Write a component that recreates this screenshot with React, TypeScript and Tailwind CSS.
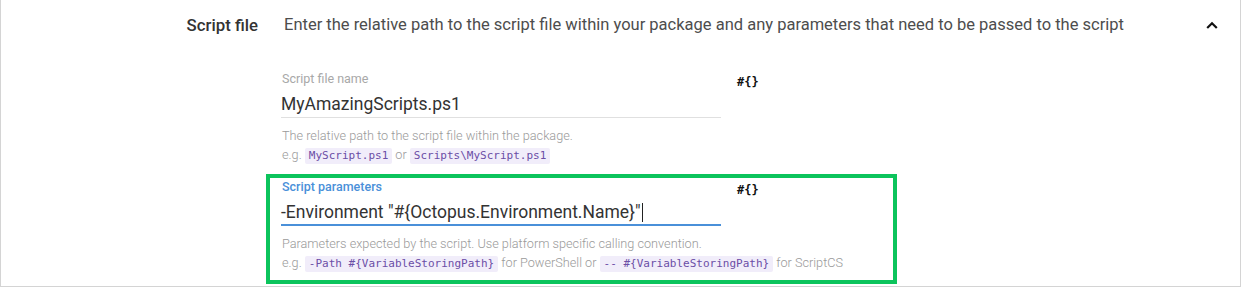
import React from "react";

const Chip = ({ children }: { children: React.ReactNode }) => (
  <code className="inline-block rounded-[2px] bg-[#f1edfa] px-[4px] font-['DejaVu_Sans_Mono','Liberation_Mono',monospace] text-[11px] leading-[16px] text-[#6b4ea6]">
    {children}
  </code>
);

type FieldProps = {
  label: string;
  value: string;
  focused?: boolean;
  highlighted?: boolean;
  hint: string;
  examples: React.ReactNode;
  tight?: boolean;
};

function Field({ label, value, focused, highlighted, hint, examples, tight }: FieldProps) {
  return (
    <div
      className={`w-[631px] border-4 pl-[12px] ${tight ? "pb-[6px]" : "pb-[8px]"} ${
        highlighted ? "border-[#0cc45c]" : "border-transparent"
      }`}
    >
      <div className="flex">
        <div className="w-[439px] pt-[2px]">
          <div
            className={`text-[12.5px] leading-[14px] ${
              focused ? "font-medium text-[#4a90d9]" : "text-[#a8a8a8]"
            }`}
          >
            {label}
          </div>
          {/* input */}
          <div
            className={`ml-[-1px] mt-[8px] flex h-[24px] items-start ${
              focused ? "border-b-2 border-[#4a90d9]" : "border-b border-[#e0e0e0]"
            }`}
          >
            <span className="text-[17.5px] leading-[20px] text-[#333]">{value}</span>
            {focused && <span className="ml-[1px] mt-[1px] inline-block h-[19px] w-px bg-[#222]" />}
          </div>
        </div>
        <div className="ml-[16px] pt-[5px] font-['DejaVu_Sans_Mono',monospace] text-[12px] font-bold leading-[14px] text-[#111]">
          #{"{}"}
        </div>
      </div>
      <div className="mt-[10px] text-[12.7px] font-light leading-[16px] text-[#9a9a9a]">{hint}</div>
      <div className="mt-[3px] whitespace-nowrap text-[12.7px] font-light leading-[16px] text-[#9a9a9a]">{examples}</div>
    </div>
  );
}

export default function App() {
  return (
    <div className="h-[287px] w-[1241px] border-x border-b border-[#d4d4d4] bg-white font-['Roboto',sans-serif]">
      {/* section header */}
      <div className="flex items-center pt-[15px]">
        <div className="w-[257px] text-right text-[16.8px] font-medium leading-[20px] text-[#333]">Script file</div>
        <div className="ml-[26px] text-[16.5px] leading-[20px] text-[#4d4d4d]">
          Enter the relative path to the script file within your package and any parameters that need to be passed to the script
        </div>
        <div className="ml-auto mr-[22px]">
          <svg width="12" height="8" viewBox="0 0 12 8">
            <path d="M1.2 7 L6 2.2 L10.8 7" fill="none" stroke="#111" strokeWidth="2.2" />
          </svg>
        </div>
      </div>

      <div className="mt-[31px] flex flex-col pl-[265px]">
        <Field
          tight
          label="Script file name"
          value="MyAmazingScripts.ps1"
          hint="The relative path to the script file within the package."
          examples={
            <>
              e.g. <Chip>MyScript.ps1</Chip> or <Chip>Scripts\MyScript.ps1</Chip>
            </>
          }
        />
        <Field
          label="Script parameters"
          value={'-Environment "#{Octopus.Environment.Name}"'}
          focused
          highlighted
          hint="Parameters expected by the script. Use platform specific calling convention."
          examples={
            <>
              e.g. <Chip>-Path #{"{VariableStoringPath}"}</Chip> for PowerShell or{" "}
              <Chip>-- #{"{VariableStoringPath}"}</Chip> for ScriptCS
            </>
          }
        />
      </div>
    </div>
  );
}
